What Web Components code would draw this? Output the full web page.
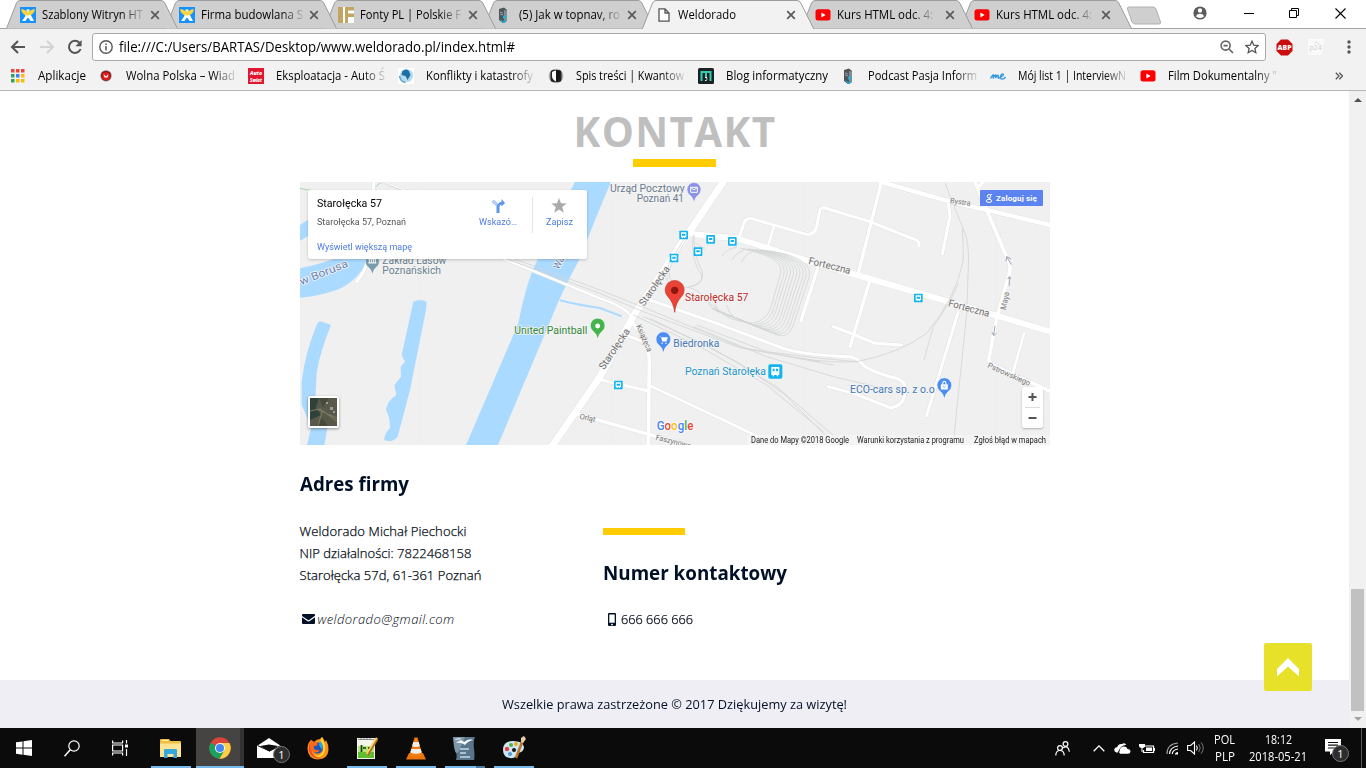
<!DOCTYPE html>
<html lang="pl">
<head>
<meta charset="utf-8">
<title>Weldorado</title>
<style>
html,body{margin:0;height:100%;overflow:hidden;background:#fff}
body{font-family:"Open Sans","Noto Sans",sans-serif;font-size:12px;color:#000}
</style>
</head>
<body>
<desktop-screen></desktop-screen>
<script>
const define=(name,html,setup)=>customElements.define(name,class extends HTMLElement{
  connectedCallback(){
    if(this.shadowRoot)return;
    this.attachShadow({mode:'open'}).innerHTML=typeof html==='function'?html(this):html;
    if(setup)setup(this,this.shadowRoot);
  }
});

/* Icon artwork, keyed by name: [viewBox width, viewBox height, markup] */
const X='stroke="#5a5a5a" stroke-width="1.7" fill="none"';
const ICONS={
close:[10,10,`<path d="M1.2 1.2l7.6 7.6M8.8 1.2L1.2 8.8" ${X}/>`],
wix:[16,16,`<rect width="16" height="16" fill="#1592fb"/><path d="M5.6 7h4.8l.8 1.5 2.8 5.4h-3.3L8 10.6l-2.7 3.3H2l3.3-4.6z" fill="#fff"/><path d="M1 2.5c2.5-.8 4.5 1 7 2.8 2.500-1.800 4.500-3.600 7-2.800-1 4-3.600 6-7 6s-6-2-7-6z" fill="#fcd53a"/><circle cx="8" cy="3.600" r="1.700" fill="#e9e7b8"/>`],
fonty:[16,16,`<rect width="16" height="16" fill="#c2a463"/><path d="M5 0h2v16H5zM10 3.500h6v3h-6zM10 10h6v6h-6z" fill="#fff"/>`],
server:[12,16,`<path d="M2 2l5-1.500L10 3v11l-4 2-4-3z" fill="#4e555b"/><path d="M7 3l3 .5V14l-3 1.500z" fill="#838c92"/><path d="M3 5l3 1M3 7l3 1" stroke="#9ba2a7"/><circle cx="7.500" cy="10" r="1.700" fill="#27b4d8"/><path d="M3 12l3 2 3-1-1 3-3-.5z" fill="#20a7cb"/>`],
page:[12,14,`<path d="M1 .8h6L11 5v8.200H1zM7 1v4h4" fill="#fff" stroke="#555" stroke-width="1.300"/>`],
yt:[16,12,`<rect x=".5" y=".3" width="15" height="11.200" rx="2.500" fill="#f00"/><path d="M6.400 3.400v5l4.200-2.500z" fill="#fff"/>`],
back:[16,14,`<path d="M15 7H2M8 1L2 7l6 6" stroke="#555" stroke-width="2" fill="none"/>`],
fwd:[16,14,`<path d="M1 7h13M8 1l6 6-6 6" stroke="#d3d3d3" stroke-width="2" fill="none"/>`],
reload:[16,16,`<path d="M13.600 10a6 6 0 1 1-1.200-6.200" stroke="#555" stroke-width="2" fill="none"/><path d="M14.600 1v6.200H8.400z" fill="#555"/>`],
info:[14,14,`<circle cx="7" cy="7" r="6.200" fill="none" stroke="#555" stroke-width="1.400"/><path d="M7 6v4.500M7 3.400v1.500" stroke="#555" stroke-width="1.500"/>`],
zoom:[14,14,`<circle cx="5.600" cy="5.600" r="4.500" fill="none" stroke="#666" stroke-width="1.600"/><path d="M3.500 5.600h4.200M9 9l4 4" stroke="#666" stroke-width="1.700"/>`],
star:[14,14,`<path d="M7 1.200l1.800 4 4.300.4-3.200 2.900.9 4.200L7 10.500l-3.800 2.200.9-4.200L.9 5.600l4.300-.4z" fill="none" stroke="#555" stroke-width="1.300"/>`],
abp:[17,17,`<path d="M5 .5h7L16.500 5v7L12 16.500H5L.5 12V5z" fill="#cb0d0d"/><text x="8.500" y="11.300" font-family="Open Sans" font-weight="800" font-size="7" text-anchor="middle" textLength="14" lengthAdjust="spacingAndGlyphs" fill="#fff">ABP</text>`],
p24:[16,16,`<path d="M0 0h16l-2 16H0z" fill="#fafafa"/><text x="1.500" y="11" font-size="7" font-family="Open Sans" fill="#d0d0d0">p24</text><path d="M6 4q4-3 5 2" fill="none" stroke="#d8d8d8"/>`],
dots:[4,14,`<g fill="#555"><circle cx="2" cy="2" r="1.700"/><circle cx="2" cy="7" r="1.700"/><circle cx="2" cy="12" r="1.700"/></g>`],
apps:[14,14,`<path d="M0 0h3.500v3.500H0zM5 0h3.500v3.500H5zM10 0h3.500v3.500H10z" fill="#e8453c"/><path d="M0 5h3.500v3.500H0z" fill="#32a350"/><path d="M5 5h3.500v3.500H5z" fill="#3f83f1"/><path d="M10 5h3.500v3.500H10zM5 10h3.500v3.500H5zM10 10h3.500v3.500H10z" fill="#fbb90c"/><path d="M0 10h3.500v3.500H0z" fill="#32a350"/>`],
wolna:[14,14,`<circle cx="7" cy="6.800" r="5.600" fill="#777"/><circle cx="7" cy="6.800" r="4.900" fill="#8b1514"/><circle cx="7" cy="7.200" r="4" fill="#e21b1b"/><path d="M4.500 5l2.500 2.500L9.500 5l-1 3.500h-3z" fill="#fff"/>`],
auto:[16,16,`<rect width="16" height="16" fill="#e2162f"/><g font-family="Open Sans" font-weight="800" font-style="italic" fill="#fff" font-size="5.500"><text x="2" y="7" textLength="12" lengthAdjust="spacingAndGlyphs">Auto</text><text x="2" y="14.300" textLength="12" lengthAdjust="spacingAndGlyphs">Swiat</text></g>`],
globe:[16,16,`<rect width="16" height="16" fill="#fff"/><circle cx="8.500" cy="7.500" r="6.600" fill="#b5d9ee"/><path d="M4.500 3q4-3 6.500 0l1.500 4-3 5-2-4-4-1z" fill="#1a6fa6"/><path d="M1.500 8q1 6 6 6.500" fill="none" stroke="#5d9cc5" stroke-width="1.500"/>`],
kwant:[16,16,`<circle cx="8" cy="8" r="7.300" fill="#aaa"/><rect x="2.500" y="2" width="11" height="12" rx="3" fill="#222"/><path d="M4 4q2-1.500 4-1.500v11Q4 11.500 4 8z" fill="#fff"/><path d="M8 3h4v5q0 3-4 5z" fill="#161616"/>`],
blog:[16,16,`<rect width="16" height="16" rx="1.500" fill="#1a2226"/><path d="M3.500 13V4h9v9M8 4v5" stroke="#35cbb0" stroke-width="2" fill="none"/><path d="M7 9h2v1H7zM8 10.500h1.500v1H8zM7 12h1.500v1H7z" fill="#fff"/>`],
me:[16,10,`<path d="M.5 7.500Q3 3 3.500 4L3 7.500Q5.500 2.500 6 4.500L5.500 7Q8 3 8.300 4.500L8 7q1.500.8 2.500-1.500M10.300 5.800Q14 5 13.200 3.200 11.800 2 10.600 5 10 8.500 12.800 8 14.500 7.500 15.500 6" fill="none" stroke="#2d96dd" stroke-width="1.300"/>`],
more:[8,8,`<path d="M.8.8L4 4 .8 7.200M4.300.8L7.500 4 4.300 7.200" fill="none" stroke="#555" stroke-width="1.300"/>`],
user:[14,14,`<circle cx="7" cy="7" r="6.600" fill="#5b5b5b"/><circle cx="7" cy="4.500" r="2.200" fill="#fff"/><path d="M2.800 10.200Q4 7.800 7 7.800t4.200 2.400Q9.500 12 7 12t-4.200-1.800z" fill="#fff"/>`],
min:[10,10,`<path d="M0 5.500h10" stroke="#000"/>`],
restore:[10,10,`<path d="M.5 2.500h7v7h-7zM2.500 2V.5h7v7H8" fill="none" stroke="#000"/>`],
exit:[11,11,`<path d="M.5.500l10 10M10.500.500l-10 10" stroke="#000" fill="none" stroke-width="1.100"/>`],
mail:[13,10,`<path d="M0 1q0-1 1-1h11q1 0 1 1v.8L7.500 5.800q-1 .8-2 0L0 1.900zM0 3.300l4.800 3.500q1.700 1.200 3.400 0L13 3.300V9q0 1-1 1H1Q0 10 0 9z" fill="#011127"/>`],
phone:[8,13,`<path fill-rule="evenodd" d="M1 0h6q1 0 1 1v11q0 1-1 1H1q-1 0-1-1V1q0-1 1-1zm.3 1.500v8.300h5.400V1.500zM4 10.700a.8.8 0 1 0 .01 0z" fill="#011127"/>`],
up:[24,20,`<path d="M1 12L12 1l11 11v7.500L12 9.500 1 19.500z" fill="#fff"/>`],
win:[16,16,`<path d="M0 2.300L6.500 1.400v6.200H0zM7.500 1.200L16 0v7.600H7.500zM0 8.500h6.500v6.200L0 13.800zM7.500 8.500H16V16l-8.500-1.200z" fill="#fff"/>`],
search:[16,17,`<circle cx="10" cy="6" r="5.200" fill="none" stroke="#fff" stroke-width="1.200"/><path d="M6.200 9.800L.5 16.200" stroke="#fff" stroke-width="1.500"/>`],
task:[17,16,`<path d="M.6.500V3h10V.500M.6 15.500V13h10v2.500M.6 5h10v6H.6zM14.500 0v3.500M14.500 9v7" fill="none" stroke="#fff" stroke-width="1.200"/><path d="M13 4.500h3v3h-3z" fill="#fff"/>`],
folder:[21,19,`<path d="M0 1q0-1 1-1h8l1.500 2H20q1 0 1 1v15H0z" fill="#f0bd45"/><path d="M0 4.500h21V18H0z" fill="#fde392"/><path d="M2 1h6v1H2z" fill="#fff0b0"/><path d="M4 11q0-1 1-1h11q1 0 1 1v8h-3.500v-4h-6v4H4z" fill="#35a9dd"/>`],
chrome:[22,22,`<circle cx="11" cy="11" r="10.700" fill="#dc4437"/><path d="M11 11L1.700 5.700A10.700 10.700 0 0 0 10.500 21.700L15.500 13.500z" fill="#1aa15e"/><path d="M11 6h9.400A10.700 10.700 0 0 1 10.500 21.700L15.400 13.600z" fill="#fece44"/><circle cx="11" cy="11" r="5.100" fill="#f5f5f5"/><circle cx="11" cy="11" r="4" fill="#4585f2"/>`],
post:[24,20,`<path d="M0 8L12 0l12 8v12H0z" fill="#fff"/><path d="M3 8l9-1.500L21 8l-8.500 5.500z" fill="#0d0d0d"/><path d="M1 7.800L12.500 13 24 7.500" stroke="#0d0d0d" fill="none"/>`],
fox:[22,23,`<path d="M4 3l3 2Q10 2 13 2l2-2q2 2 3 5l1-2q3 5 2.500 10Q21 22 11 22.500 1 22 .5 12 .5 6 4 3z" fill="#f8921b"/><path d="M15 0q-3 4 0 8 3 5-1 9-4 3-9 0 5 6 11 1 5-7-1-18z" fill="#ffd432"/><path d="M3 6q-3 7 1 12 5 5 11 3Q5 21 4 12z" fill="#f14a22"/><circle cx="10.500" cy="11" r="5.500" fill="#2254b8"/><path d="M4 3l3 2q3 0 4 2L9 9H7q-1 4 3 4l3 .5Q9 17 5 14 1 8 4 3z" fill="#f9691b"/><path d="M13 4q4 3 2 9l-3-5z" fill="#29a5df"/>`],
notepad:[22,23,`<path d="M1 1h18v21H1z" fill="#f4f6ec"/><path d="M2 9h16v12H2z" fill="#b4e57a"/><path d="M2 15h16v6H2z" fill="#5fbe2e"/><path d="M2 2.500h16M5 1v2M8 1v2M11 1v2M14 1v2" stroke="#777" stroke-width=".8"/><path d="M5.500 8v7M7 11h3M12 11h3" stroke="#173d12" stroke-width="1.700"/><path d="M21.500 1L11.500 18" stroke="#ab722c" stroke-width="3"/><path d="M20.500 1L10.500 17" stroke="#ffd35a" stroke-width="1.500"/>`],
vlc:[20,23,`<path d="M3 16h14l3 6.500H0z" fill="#ef7209"/><path d="M8.500.500h3L16.500 18q-6.500 3-13 0z" fill="#f07c13"/><path d="M7.300 5h5.400l1.200 4.200q-4 1.500-7.800 0zM5.300 12h9.400l1 3.500q-5.700 2.500-11.400 0z" fill="#eee"/>`],
office:[23,23,`<path d="M0 0h22q-2 4-1 12 1 7 0 11H3Q5 17 1 11z" fill="#58758b"/><path d="M0 0h12L6 14q-3 4-4 0z" fill="#7f98a9"/><path d="M3 6q5-5 8-1 5-4 9-2-5 1-8 5-4-3-9-2zM1 3Q5 0 9 2" fill="#f4f6f7"/><path d="M7 12h9M7 16h6M7 20h10" stroke="#c7d7e2" stroke-width="1.500"/>`],
paint:[24,24,`<path d="M1 14Q1 5 11 5q10 0 11 6 0 5-6 6-2 6-8 5-7-1-7-8z" fill="#d1e6f3"/><circle cx="5" cy="13" r="2.200" fill="#df4242"/><circle cx="9" cy="9" r="2" fill="#54b33f"/><circle cx="14" cy="8" r="2" fill="#f0ab24"/><circle cx="8" cy="18" r="2" fill="#4f9bd7"/><circle cx="12" cy="14" r="2" fill="#161616"/><path d="M22 1L14 22" stroke="#ba7529" stroke-width="2.600"/><path d="M19 2l3-2 2 3-3 4-2-1z" fill="#e8cba0"/>`],
people:[15,15,`<g fill="none" stroke="#fff" stroke-width="1.200"><circle cx="10.500" cy="3" r="2.400"/><circle cx="5" cy="7" r="2.400"/><path d="M.8 14.500q0-5 4.200-5t4.200 5M8 6.800q5.500-3 6.300 4"/></g>`],
chev:[12,7,`<path d="M.7 6.200L6 .9l5.300 5.300" stroke="#fff" fill="none" stroke-width="1.300"/>`],
cloud:[17,11,`<path d="M4 9.500H2.500Q0 9 .2 6.500.8 4.300 3 4.300 4.500.400 8.200 1q2-1.600 4 .8Q6 3 5.200 7 4 7.800 4 9.500z" fill="#fff"/><path d="M6 10.800Q4.300 9.500 5.800 7.600 6 4 9.500 3.500q3-.3 4 2.400 3 .3 3 2.700-.2 2.200-2.500 2.200z" fill="#fff"/>`],
power:[16,12,`<path d="M5.500 4h9v6.500h-10V8" fill="none" stroke="#fff" stroke-width="1.200"/><path d="M7 5.500h6V9H7zM15 6h1v3h-1zM1.500 0v2M4.500 0v2M0 2h6v2.500Q5 6 3.500 6v4h-1V6Q.500 6 0 4z" fill="#fff"/>`],
wifi:[13,13,`<g fill="none" stroke="#fff" stroke-width="1.200"><path d="M1 12Q1 2 12 1" opacity=".6"/><path d="M3.500 12Q4 5 12 4M6.300 12Q6.500 8 12 7"/></g><path d="M9 12.500Q9 10 12 10v2.500z" fill="#fff"/>`],
vol:[17,14,`<path d="M.6 4.500h3L7.500 1v12L3.600 9.500h-3z" fill="none" stroke="#fff" stroke-width="1.100"/><path d="M9.500 4.500q1.500 2.500 0 5" fill="none" stroke="#fff" stroke-width="1.100"/><path d="M11.700 3q3 4 0 8M14 1.300q4.500 5.700 0 11.400" fill="none" stroke="#777"/>`],
note:[16,16,`<path d="M0 0h16v12.500H9L5 16v-3.500H0z" fill="#fff"/><path d="M3 3.500h10M3 6.200h10M3 9h7" stroke="#111" stroke-width="1.200"/>`],
route:[14,14,`<path d="M5.500 14V7Q4 5 .8 3.500L2.500 1Q6 3 7 5q1-2 3.500-2.200V0L14 4l-3.500 3.500V5.400Q8.500 5.800 8.500 8v6z" fill="#5b97ea"/><path d="M5.500 7Q4 5 .8 3.500L2.500 1Q6 3 7 5z" fill="#b6d0f8"/>`],
fav:[16,15,`<path d="M8 0l2 5.300 5.700.3-4.500 3.500 1.600 5.600L8 11.500l-4.800 3.200 1.600-5.600L.3 5.600 6 5.300z" fill="#aaa"/>`],
g:[8,9,`<g fill="none" stroke="#fff"><circle cx="4" cy="2.300" r="1.700"/><ellipse cx="4" cy="6.900" rx="2.700" ry="1.600"/><path d="M5.500.500H7M5 4L4 5.500"/></g>`]
};
define('app-icon',el=>{
  const [w,h,m]=ICONS[el.getAttribute('name')],s=+el.getAttribute('scale')||1;
  return `<style>:host{display:block;flex:none;line-height:0;width:${w*s}px;height:${h*s}px}svg{display:block}</style><svg width="${w*s}" height="${h*s}" viewBox="0 0 ${w} ${h}">${m}</svg>`;
});

define('chrome-tab',el=>{
  const on=el.hasAttribute('active'),f=on?'#f2f2f2':'#cfcfcf';
  return `<style>
:host{display:block;width:172px;height:29px;flex:none;margin-right:-13px;position:relative}
:host([active]){z-index:20}
.shape{display:block;position:absolute;inset:0;z-index:0}
.in{position:relative;display:grid;grid-template-columns:22px 1fr 10px;height:29px;align-items:center;padding:0 18px 0 14px;box-sizing:border-box}
.in>*{align-self:center}
</style><svg class="shape" width="172" height="29"><path d="M.5 28.500L10.500 3Q11.800.500 14 .5H155Q157.500.500 158.800 3L171.500 28.500" fill="${f}" stroke="#9d9d9d"/>${on?'<path d="M1 28h170v1H1z" fill="#f2f2f2"/>':''}</svg>
<div class="in"><app-icon name="${el.getAttribute('icon')}" style="${on?'margin-left:2px':''}"></app-icon><fit-text w="${el.getAttribute('w')}" ${el.hasAttribute('fade')?'fade':''}>${el.getAttribute('label')}</fit-text><app-icon name="close"></app-icon></div>`;
});

define('tab-strip',()=>{
  const t=[['wix','Szablony Witryn HT',101],['wix','Firma budowlana S',102],['fonty','Fonty PL | Polskie F',101],['server','(5) Jak w topnav, ro',101],['page','Weldorado',58],['yt','Kurs HTML odc. 4:',96],['yt','Kurs HTML odc. 4:',96]];
  return `<style>
:host{display:flex;height:29px;padding-left:6px;box-sizing:border-box;background:linear-gradient(#0000 28px,#a3a3a3 28px) #fff}
chrome-tab:nth-of-type(7){width:169px}
.new{flex:none;margin:6px 0 0 10px}
.win{display:flex;margin-left:auto;align-items:center;height:26px;padding-right:20px}
</style>${t.map(([i,l,w],n)=>`<chrome-tab style="z-index:${n==4?20:10-n}" icon="${i}" label="${l}" w="${w}" ${n==4?'active':'fade'}></chrome-tab>`).join('')}
<svg class="new" width="36" height="19"><path d="M3 1h24q2 0 3 2l4.500 13q.5 2-1.500 2H9q-2 0-3-2L1.500 3q-.5-2 1.500-2z" fill="#cfcfcf" stroke="#b0b0b0"/></svg>
<div class="win"><app-icon name="user"></app-icon><app-icon name="min" style="margin-left:37px"></app-icon><app-icon name="restore" style="margin-left:35px"></app-icon><app-icon name="exit" style="margin-left:36px"></app-icon></div>`;
});

define('tool-bar',`<style>
:host{display:flex;height:34px;box-sizing:border-box;align-items:center;background:#f2f2f2;padding:4px 15px 2px 10px}
.box{display:flex;flex:none;align-items:center;box-sizing:border-box;width:1174px;height:28px;border:1px solid #aaa;border-radius:3px;background:#fff;margin-left:9px;padding:0 6px;font-size:14px}
.box fit-text{margin:-1px auto 0 6px}
</style><app-icon name="back"></app-icon><app-icon name="fwd" style="margin-left:13px"></app-icon><app-icon name="reload" style="margin-left:12px"></app-icon>
<div class="box"><app-icon name="info"></app-icon><fit-text w="396">file:///C:/Users/BARTAS/Desktop/www.weldorado.pl/index.html#</fit-text><app-icon name="zoom"></app-icon><app-icon name="star" style="margin-left:11px"></app-icon></div>
<app-icon name="abp" style="margin-left:10px"></app-icon><app-icon name="p24" style="margin-left:15px"></app-icon><app-icon name="dots" style="margin-left:auto"></app-icon>`);

define('bookmark-bar',()=>{
  const b=[['apps','Aplikacje',48,88],['wolna','Wolna Polska – Wiad',109,150],['auto','Eksploatacja - Auto Ś',109,150],['globe','Konflikty i katastrofy',107,150],['kwant','Spis treści | Kwantow',108,150],['blog','Blog informatyczny',102,142],['server','Podcast Pasja Inform',109,150],['me','Mój list 1 | InterviewN',108,150],['yt','Film Dokumentalny "',109,150]];
  return `<style>:host{display:flex;height:28px;box-sizing:border-box;padding:0 23px 2px 10px;background:#f2f2f2;border-bottom:1px solid #b6b6b6;align-items:center}
.b{display:grid;grid-template-columns:28px 1fr;flex:none;align-items:center}
.i{width:16px;display:flex;justify-content:center}.b:first-child .i{width:14px}
app-icon[name=more]{margin-left:auto}</style>${b.map(([i,l,w,c])=>`<div class="b" style="width:${c}px"><div class="i"><app-icon name="${i}"></app-icon></div><fit-text w="${w}" ${c==150?'fade':''}>${l}</fit-text></div>`).join('')}<app-icon name="more"></app-icon>`;
});

/* The map is drawn in thirds of a pixel so that thin roads keep whole numbers. */
define('map-view',()=>{
  const pin=(x,y,c,s=1,g='')=>`<g transform="translate(${x} ${y}) scale(${s})"><path d="M0 0Q-3-16-13-23A21 21 0 1 1 13-23Q3-16 0 0z" fill="${c}" stroke="#fff" stroke-width="1.500"/>${g}</g>`;
  const stop=(x,y)=>`<g transform="translate(${x} ${y})"><rect x="-13" y="-13" width="26" height="26" rx="2" fill="#13b5f0"/><path fill-rule="evenodd" d="M-8-8H8V7H5V9H2V7H-2V9H-5V7H-8zM-5-4V2H5V-4z" fill="#fff"/></g>`;
  const T=(x,y,t,w,c,s=30,r=0)=>`<text transform="translate(${x} ${y+(r?0:1.5)}) rotate(${r})" textLength="${w}" lengthAdjust="spacingAndGlyphs" font-size="${s}" fill="${c}">${t}</text>`;
  let yard='';
  const mix=(a,b,t)=>a.map((v,k)=>Math.round(v+(b[k]-v)*t));
  for(let i=0;i<10;i++){
    const p=mix([1320,205,1400,222,1448,240,1442,280,1415,375,1405,415,1370,435,1340,427,1260,395],[1400,212,1480,222,1535,245,1528,290,1480,435,1465,475,1440,470,1420,460,1235,385],i/9);
    yard+=`<path d="M${p[0]} ${p[1]}C${p.slice(2,8).join(' ')}L${p[8]} ${p[9]}C${p.slice(10,16).join(' ')}L${p[16]} ${p[17]}"/>`;
  }
  const roads=[
   ['M1270 5L1165 160 1005 400 900 590 755 800',21],['M1180 163L1310 175 1500 235 1670 285 2100 410 2260 458',18],
   ['M600 232L900 355Q975 380 1000 415',7],['M1050 360L1250 430 1450 505Q1520 526 1650 530 1675 535 1685 550 1700 572 1790 595 1820 605 1815 635 1812 680 1770 683L1660 640 1585 620',9],
   ['M992 422Q1045 480 1048 540L1045 800',11],['M895 598L1045 633',9],['M975 465L1045 490',9],['M825 700L1070 770 1180 800',10],['M1050 617L1270 720 1370 768 1400 800',8],
   ['M1315 180L1333 125Q1340 114 1355 116L1520 163Q1545 165 1550 140L1560 90Q1563 82 1575 84L1710 125 1835 175Q1860 180 1857 198',9],['M1405 195L1422 140',8],
   ['M1743 10L1675 280M1710 300L1650 500M1553 265L1503 422',10],['M1600 440L1665 465 1725 490 1805 495',9],['M1740 5L1950 65 2060 90 2255 136',13],['M1945 70L1950 110 1927 222',9],
   ['M2025 5L2060 90 2128 250Q2132 262 2128 280L2090 415 2066 540Q2070 552 2100 565L2255 636',11],['M2050 5L2035 22',10],['M2172 460L2140 575',8],['M1975 395L1880 707',9],['M170 305Q200 270 205 230L222 5',9],['M240 5L340 40',6]];
  return `<style>
:host{display:block;position:relative;width:750px;height:263px;overflow:hidden;background:#f0f0f0;font-family:Roboto,sans-serif}
svg.m{display:block}
.card{position:absolute;left:8px;top:8px;width:279px;height:69px;box-sizing:border-box;background:#fff;border-radius:2px;box-shadow:0 1px 3px #0003;display:grid;grid-template-columns:1fr 68px 53px;padding:7px 2px 0 8.500px;font-size:9.500px;color:#555}
.card fit-text{display:block}.a{font-size:11px;line-height:14px;color:#000}.b{line-height:13px;margin-top:4px}.c{line-height:13px;margin-top:12px}
.c,.act{color:#4b7bdc}.act{display:flex;flex-direction:column;align-items:center;line-height:12px;height:34px;padding-top:2px}.act fit-text{margin-top:3px}.act+.act{border-left:1px solid #e5e5e5}
.sat{position:absolute;left:8px;top:214px;width:27px;height:28px;border:2px solid #fff;border-radius:2px;box-shadow:0 1px 3px #0006}
.zoom{position:absolute;left:722px;top:205px;width:21px;height:41px;background:#fff;border-radius:2px;box-shadow:0 1px 2px #0004}
.log{position:absolute;left:680px;top:8px;width:63px;height:16px;border-radius:1px;background:#5b84f0;color:#fff;display:flex;align-items:center;gap:3px;padding-left:5px;box-sizing:border-box;font-size:8px;font-weight:700}
.cr{position:absolute;right:0;bottom:0;height:10px;line-height:10px;display:flex;gap:8px;padding:0 4px;background:#f5f5f5b0;font-size:8.500px;color:#222}
</style>
<svg class="m" width="750" height="263" viewBox="0 6 2250 789">
<g stroke="#e9e9e9" stroke-width="1"><path d="M0 157H2250M0 733H2250M361 0V800M937 0V800M1513 0V800M2089 0V800"/></g>
<g fill="#aadaff"><path d="M825 5H933Q880 130 840 235 790 325 750 425L592 800H496L655 430Q680 300 715 235z"/><path d="M0 265Q70 250 115 232H207Q175 305 110 330 50 350 0 353z"/><path d="M0 135L30 115V165L0 182z"/><path d="M50 435Q55 420 68 426L93 435Q60 515 50 580L45 680 82 745 72 800H20L34 740 5 675V605Q15 520 50 435z"/><path d="M340 365Q360 355 380 365L378 390 330 630 293 770Q275 790 253 780 250 767 270 743 270 710 258 690 262 662 289 645L283 615 303 590 302 560 315 545 305 525z"/></g>
<path d="M780 361Q830 375 900 384L965 409" fill="none" stroke="#aadaff" stroke-width="6"/><path d="M0 25Q20 30 35 31M225 22L245 5" stroke="#a6d6a8" stroke-width="3" fill="none"/>
<g fill="none" stroke="#e3e3e3" stroke-linecap="round" stroke-linejoin="round">${roads.map(r=>`<path d="${r[0]}" stroke-width="${r[1]+3}"/>`).join('')}</g>
<g fill="none" stroke="#fff" stroke-linecap="round" stroke-linejoin="round">${roads.map(r=>`<path d="${r[0]}" stroke-width="${r[1]}"/>`).join('')}</g>
<g fill="none" stroke="#d3d5d6" stroke-width="2.500">${yard}
<path d="M240 5L420 75M620 237L900 340 1030 395 1310 500 1560 545M630 232L900 330 1050 390 1330 505 1600 555M1000 405L1200 500 1400 615 1570 755M1030 410L1230 500 1430 620 1610 775M1050 415L1310 545 1450 640 1590 780M1180 440L1400 530 1600 590 1750 625M1190 435L1400 515 1560 535 1670 545"/>
<path d="M1165 170L1115 250Q1090 310 1150 325 1215 315 1205 285 1170 240 1180 165M1157 170L1107 250Q1085 310 1130 330M1182 165Q1180 225 1207 275 1215 310 1165 322 1200 330 1230 370 1250 390 1290 410M1190 190Q1200 205 1215 205M1265 230Q1280 205 1310 202M1297 240Q1310 215 1330 213M1325 247Q1335 222 1355 218M1225 370Q1240 392 1262 398M1245 372Q1255 410 1325 425M1280 375Q1290 420 1350 432"/>
<path d="M1935 10L1995 160Q2008 195 2005 260L2000 400 1962 770M1987 145Q1990 190 1990 240 1970 350 1880 460 1800 520 1670 545 1600 550 1500 535M1975 310Q1950 370 1900 440L1872 540"/></g>
<g fill="none" stroke="#9ea4b4" stroke-width="3"><path d="M2120 230l14 24M2118 244l2-14 13 7M2128 317v-26M2123 297l5-7 5 7M2085 437l-4 28M2076 457l5 10 8-7"/></g>
<g stroke="#f5f5f5" stroke-width="5" stroke-linejoin="round" paint-order="stroke" font-family="Roboto">
${T(4,316,'w Borusa',153,'#6684b4',32,-22)}${T(776,270,'Warta',72,'#6684b4',30,-63)}
${T(247,250,'Zakład Lasów',192,'#6b818f')}${T(247,281,'Poznańskich',176,'#6b818f')}${T(643,460,'United Paintball',219,'#35863a')}
${T(930,34,'Urząd Pocztowy',224,'#6a7a8d')}${T(1010,65,'Poznań 41',142,'#6a7a8d')}
${T(1032,380,'Starołęcka',138,'#6f6f6f',30,-55)}${T(912,571,'Starołęcka',141,'#6f6f6f',30,-56)}
${T(1008,438,'Książęca',86,'#737373',24,66)}${T(1155,362,'Starołęcka 57',190,'#bd2c2a')}${T(1120,499,'Biedronka',138,'#4878b5')}
${T(1155,583,'Poznań Starołęka',243,'#1895c8')}${T(838,716,'Orląt',48,'#777',23,12)}${T(1066,779,'Faszynowa',108,'#777',23,14)}
${T(1524,251,'Forteczna',129,'#6f6f6f',30,14)}${T(1943,378,'Forteczna',127,'#6f6f6f',30,15)}${T(1949,69,'Bystra',62,'#777',23,8)}
${T(2117,391,'Maya',55,'#777',24,-78)}${T(2061,562,'Pstrowskiego',138,'#777',23,24)}${T(1650,637,'ECO-cars sp. z o.o',254,'#4878b5')}</g>
${pin(217,284,'#789bad',1,'<path d="M-12-47h24M-12-35h24M-9-47v12M-3-47v12M3-47v12M9-47v12" stroke="#fff" stroke-width="3"/>')}
${pin(893,478,'#46b44c',1.05,'<circle cy="-38" r="7" fill="#fff"/>')}
${pin(1182,68,'#8a93e5',1,'<path d="M-10-46h20v15h-20zM-10-46l10 8 10-8" fill="none" stroke="#fff" stroke-width="3"/>')}
${pin(1090,519,'#4b8df2',1.05,'<path d="M-12-47h5l4 14H9l4-12H-6z" fill="#fff"/><path d="M-5-28h3M6-28h3" stroke="#fff" stroke-width="4"/>')}
${pin(1933,657,'#4b8df2',1.05,'<path d="M-10-42H10v15H-10z" fill="#fff"/><path d="M-5-41q0-10 5-10t5 10M-4-36q4 7 8 0" fill="none" stroke="#fff" stroke-width="3"/><path d="M-4-37q4 7 8 0" fill="none" stroke="#4b8df2" stroke-width="2"/>')}
<path d="M1124 397Q1121 368 1104 350A28.500 28.500 0 1 1 1144 350Q1127 368 1124 397z" fill="#ea4335" stroke="#c43328" stroke-width="2"/><circle cx="1124" cy="331" r="11" fill="#8c1710"/>
${[[1151,165],[1232,178],[1297,184],[1194,215],[1122,234],[955,615],[1855,354]].map(p=>stop(...p)).join('')}
<rect x="1405" y="553" width="42" height="43" rx="5" fill="#13b5f0"/><path fill-rule="evenodd" d="M1414 561h24v24h-4v4h-4v-4h-8v4h-4v-4h-4zm4 5v8h6v-8zm10 0v8h6v-8z" fill="#fff"/>
<text x="1070" y="749" font-family="Roboto" font-size="36" font-weight="500" textLength="110" lengthAdjust="spacingAndGlyphs" stroke="#fff" stroke-width="4" paint-order="stroke"><tspan fill="#4285f4">G</tspan><tspan fill="#ea4335">o</tspan><tspan fill="#fbbc05">o</tspan><tspan fill="#4285f4">g</tspan><tspan fill="#34a853">l</tspan><tspan fill="#ea4335">e</tspan></text>
</svg>
<div class="card"><div><fit-text class="a" w="65">Starołęcka 57</fit-text><fit-text class="b" w="89">Starołęcka 57, Poznań</fit-text><fit-text class="c" w="95">Wyświetl większą mapę</fit-text></div>
<div class="act"><app-icon name="route"></app-icon><fit-text w="38">Wskazó…</fit-text></div><div class="act"><app-icon name="fav" style="margin-top:-1px"></app-icon><fit-text w="27">Zapisz</fit-text></div></div>
<svg class="sat" viewBox="0 0 27 28"><path d="M0 0h27v28H0z" fill="#58594b"/><path d="M0 0h9L6 9l5 8L0 22z" fill="#2f4239"/><path d="M9 0l10 0-6 9zM12 20l6 8H6z" fill="#454a3c"/><path d="M0 13l10-2 17 12M6 11l21 9M8 28l4-14" stroke="#77765f" stroke-width="1.200" fill="none"/><path d="M20 9h3v3h-3zM16 4h2v2h-2zM23 13h2v2h-2z" fill="#a19c93"/></svg>
<svg class="zoom" viewBox="0 0 21 41"><path d="M3 20.500h15" stroke="#ddd"/><path d="M6.500 10h8M10.500 6v8M6.500 31h8" stroke="#555" stroke-width="2"/></svg>
<div class="log"><app-icon name="g"></app-icon><fit-text w="41">Zaloguj się</fit-text></div>
<div class="cr"><fit-text w="98">Dane do Mapy ©2018 Google</fit-text><fit-text w="107">Warunki korzystania z programu</fit-text><fit-text w="72" style="margin-left:2px">Zgłoś błąd w mapach</fit-text></div>`;
});

define('contact-page',`<style>
:host{display:flex;flex-direction:column;flex:1;height:637px;background:#fff;color:#001026}
main{width:750px;padding:13px 0 0 300px;flex:1}
h1,h2,p{margin:0}
h1{font-size:40.500px;line-height:55px;color:#bfbfbf;text-align:center;font-weight:700}
.bar{height:8px;width:83px;background:#fc0}
h1+.bar{margin:0 0 15px 333px}
.cols{display:grid;grid-template-columns:303px 1fr;font-size:13px;line-height:22px;font-weight:300}
.cols p{-webkit-text-stroke:.25px currentColor;color:#000814}
h2{font-size:20px;line-height:30px;font-weight:700}
.l{padding-top:24px}.l h2{margin-bottom:21px}.r{padding-top:83px}.r .bar{height:7px;width:82px;margin-bottom:23px}.r h2{margin-bottom:20px}
.l fit-text{margin-left:-.5px}
.ic{display:flex;align-items:center;gap:3px;padding-left:2px}.l .ic{margin-top:22px;font-style:italic;-webkit-text-stroke:0}.r .ic{gap:5px;padding-left:5px}
p{height:22px}
footer{height:48px;box-sizing:border-box;background:#efeef5;display:flex;align-items:center;justify-content:center;font-size:13px;font-weight:400}
.top{position:fixed;left:1264px;top:643px;width:48px;height:48px;background:#e8e12a;border-radius:2px;display:flex;align-items:center;justify-content:center}
</style><main><h1><fit-text w="203">KONTAKT</fit-text></h1><div class="bar"></div><map-view></map-view>
<div class="cols"><div class="l"><h2><fit-text w="109">Adres firmy</fit-text></h2><p><fit-text w="167">Weldorado Michał Piechocki</fit-text></p><p><fit-text w="172">NIP działalności: 7822468158</fit-text></p><p><fit-text w="182">Starołęcka 57d, 61-361 Poznań</fit-text></p><p class="ic"><app-icon name="mail"></app-icon><fit-text w="137">weldorado@gmail.com</fit-text></p></div>
<div class="r"><div class="bar"></div><h2><fit-text w="184">Numer kontaktowy</fit-text></h2><p class="ic"><app-icon name="phone"></app-icon><fit-text w="72">666 666 666</fit-text></p></div></div></main>
<footer><fit-text w="345">Wszelkie prawa zastrzeżone © 2017 Dziękujemy za wizytę!</fit-text></footer>
<div class="top"><app-icon name="up"></app-icon></div>`);

define('scroll-bar',`<style>:host{display:flex;flex-direction:column;align-items:center;justify-content:space-between;width:17px;height:637px;background:#f1f1f1}
.th{width:13px;height:122px;background:#c1c1c1;margin-top:auto;margin-bottom:6px}svg{display:block;margin:7px 0 0}svg+.th+svg{margin:0 0 7px}</style>
<svg width="8" height="4"><path d="M0 4l4-4 4 4z" fill="#505050"/></svg><div class="th"></div><svg width="8" height="4"><path d="M0 0h8L4 4z" fill="#a3a3a3"/></svg>`);

define('task-bar',()=>{
  const a=['folder','chrome','post','fox','notepad','vlc','office','paint'];
  return `<style>
:host{display:flex;height:40px;background:#0c0b0b;color:#fff}
.s{display:grid;grid-template-columns:48px 48px 48px;align-items:center;justify-items:center;padding-right:2px}
.a{display:grid;grid-template-columns:repeat(8,49px)}
.a>div{display:flex;align-items:center;justify-content:center;position:relative}
.run::after{content:"";position:absolute;left:5px;right:4px;bottom:0;height:2px;background:#76b9ed}
.a .chrome{background:linear-gradient(90deg,#454443 44px,#323232 44px);margin:0 0 0 1px}
.a .chrome::after{left:0;right:0}
.a .office::after{background:linear-gradient(90deg,#76b9ed 31px,#4c7ba1 31px)}
.n{position:absolute;width:15px;height:15px;border:1px solid #777;border-radius:50%;background:#2d2d2d;display:flex;align-items:center;justify-content:center;font-size:11px;line-height:15px}
.t{display:flex;margin-left:auto;align-items:center}
.t>div{line-height:17px;text-align:center}.t .nt{position:relative;margin:-3px 0 0 18px}
.t .end{width:1px;height:40px;background:#555;margin:0 4px 0 20px}
</style><div class="s"><app-icon name="win"></app-icon><app-icon name="search"></app-icon><app-icon name="task"></app-icon></div>
<div class="a">${a.map(n=>`<div class="${n} ${/post|fox/.test(n)?'':'run'}"><app-icon name="${n}"></app-icon>${n=='post'?'<span class="n" style="left:29px;top:18px">1</span>':''}</div>`).join('')}</div>
<div class="t"><app-icon name="people"></app-icon><app-icon name="chev" style="margin-left:23px"></app-icon><app-icon name="cloud" style="margin-left:9px"></app-icon><app-icon name="power" style="margin-left:8px"></app-icon><app-icon name="wifi" style="margin-left:11px"></app-icon><app-icon name="vol" style="margin-left:8px"></app-icon>
<div style="width:21px;margin-left:10px"><fit-text w="21">POL</fit-text><fit-text w="20">PLP</fit-text></div>
<div style="width:58px;margin-left:14px"><fit-text w="27">18:12</fit-text><fit-text w="58">2018-05-21</fit-text></div>
<div class="nt"><app-icon name="note"></app-icon><span class="n" style="left:7px;top:6px">1</span></div><div class="end"></div></div>`;
});

define('desktop-screen',`<style>:host{display:grid;grid-template-rows:29px 34px 28px 637px 40px;width:1366px;height:768px;overflow:hidden}
.v{display:grid;grid-template-columns:1349px 17px}</style><tab-strip></tab-strip><tool-bar></tool-bar><bookmark-bar></bookmark-bar><div class="v"><contact-page></contact-page><scroll-bar></scroll-bar></div><task-bar></task-bar>`);

/* Text run fitted to a set width: tracked out when short, condensed when long. */
define('fit-text',el=>`<style>:host{display:inline-block;white-space:nowrap;vertical-align:top;width:${el.getAttribute('w')}px}
:host([fade]){overflow:hidden;-webkit-mask-image:linear-gradient(90deg,#000 calc(100% - 22px),#0002 100%);mask-image:linear-gradient(90deg,#000 calc(100% - 22px),#0002 100%)}
span{display:inline-block;text-align:left;transform-origin:0 50%}</style><span><slot></slot></span>`,(el,root)=>{
  const s=root.querySelector('span'),w=+el.getAttribute('w'),n=el.textContent.length,now=s.getBoundingClientRect().width;
  if(now>w)s.style.transform=`scaleX(${w/now})`;
  else s.style.letterSpacing=(w-now)/n+'px';
});
</script>
</body>
</html>
